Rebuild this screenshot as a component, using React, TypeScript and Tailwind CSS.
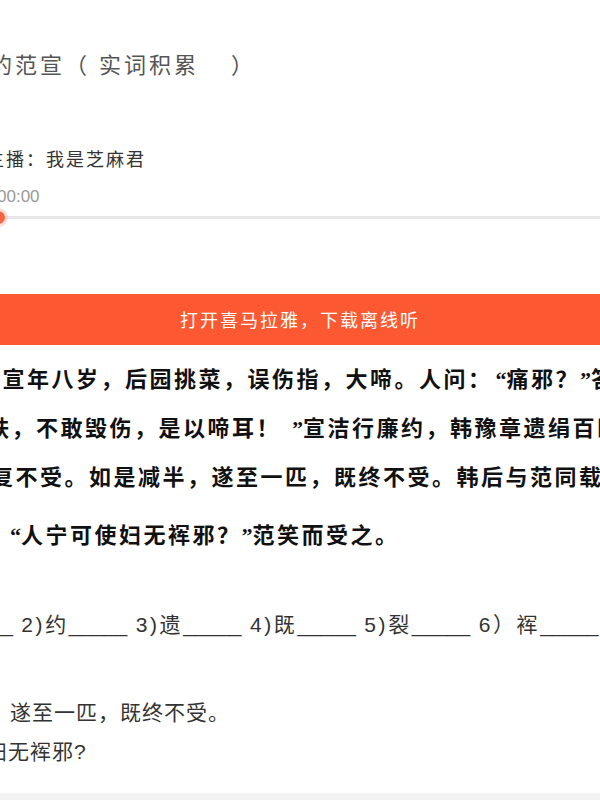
import React from 'react';

const cjk = "font-['Noto_Sans_CJK_SC','Noto_Sans',sans-serif]";

// narrow curly quotes, the passage in the picture sets them tighter than full-width
const Lq = () => <span className="inline-block w-[14px] text-right font-['Liberation_Serif',serif] tracking-normal">“</span>;
const Rq = ({ w = 'w-[11px]' }: { w?: string }) => (
  <span className={`inline-block ${w} text-left font-['Liberation_Serif',serif] tracking-normal`}>”</span>
);

function Blank() {
  return <span className="tracking-normal">_____</span>;
}

export default function App() {
  return (
    <div className={`relative h-[800px] w-[600px] overflow-hidden bg-white ${cjk}`}>
      {/* title */}
      <div className="ml-[-60px] whitespace-nowrap pt-[46px] text-[22px] leading-[34px] tracking-[3px] text-[#555]">
        八岁的范宣<span className="mr-[9px]">（</span>实词积累<span className="ml-[32px]">）</span>
      </div>

      {/* anchor + player */}
      <div className="ml-[-14px] mt-[66px] whitespace-nowrap text-[18px] leading-[24px] tracking-[2px] text-[#333]">
        主播：我是芝麻君
      </div>
      <div className="ml-[-3px] mt-[17px] font-['Liberation_Sans',sans-serif] text-[17px] leading-[20px] text-[#999]">
        00:00
      </div>
      <div className="relative mt-[9px] h-[3px] w-full bg-[#e8e8e8]">
        <div className="absolute left-[-8px] top-[-5px] h-[13px] w-[13px] rounded-full bg-[#f86442] shadow-[0_0_0_3px_rgba(248,100,66,0.2)]" />
      </div>

      {/* open app banner */}
      <div className="mt-[75px] flex h-[51px] items-center justify-center bg-[#fc5832] text-[18px] tracking-[2px] text-white">
        打开喜马拉雅，下载离线听
      </div>

      {/* passage */}
      <div className="mt-[9px] text-[22px] font-bold tracking-[2.5px] text-[#111]">
        <div className="ml-[-22px] whitespace-nowrap leading-[47px]">
          范宣年八岁，后园挑菜，误伤指，大啼。人问：<Lq />痛邪？<Rq />答曰：<Lq />非为痛，身体发
        </div>
        <div className="ml-[-13px] whitespace-nowrap leading-[47px]">
          肤，不敢毁伤，是以啼耳！<Rq w="w-[22px] text-right" />宣洁行廉约，韩豫章遗绢百匹，不受；减五十匹，
        </div>
        <div className="ml-[-9px] whitespace-nowrap leading-[47px]">
          复不受。如是减半，遂至一匹，既终不受。韩后与范同载，就车中裂二丈与范，
        </div>
        <div className="ml-[-42px] mt-[11px] whitespace-nowrap leading-[47px]">
          云：<Lq />人宁可使妇无裈邪？<Rq />范笑而受之。
        </div>
      </div>

      {/* exercise */}
      <div className="ml-[-93px] mt-[51px] whitespace-nowrap font-['Liberation_Sans','Noto_Sans_CJK_SC',sans-serif] text-[21px] leading-[30px] tracking-[2.6px] text-[#333]">
        1)指<Blank /> 2)约<Blank /> 3)遗<Blank /> 4)既<Blank /> 5)裂<Blank /> 6）裈<Blank />
      </div>
      <div className="ml-[-100px] mt-[53px] whitespace-nowrap text-[21px] leading-[36px] tracking-[1px] text-[#333]">
        如是减半，遂至一匹，既终不受。
      </div>
      <div className="ml-[-102px] mt-[3px] whitespace-nowrap text-[21px] leading-[36px] tracking-[1px] text-[#333]">
        人宁可使妇无裈邪<span className="font-['Liberation_Sans',sans-serif]">?</span>
      </div>

      <div className="absolute bottom-0 left-0 h-[7px] w-full bg-[#f2f2f2]" />
    </div>
  );
}
